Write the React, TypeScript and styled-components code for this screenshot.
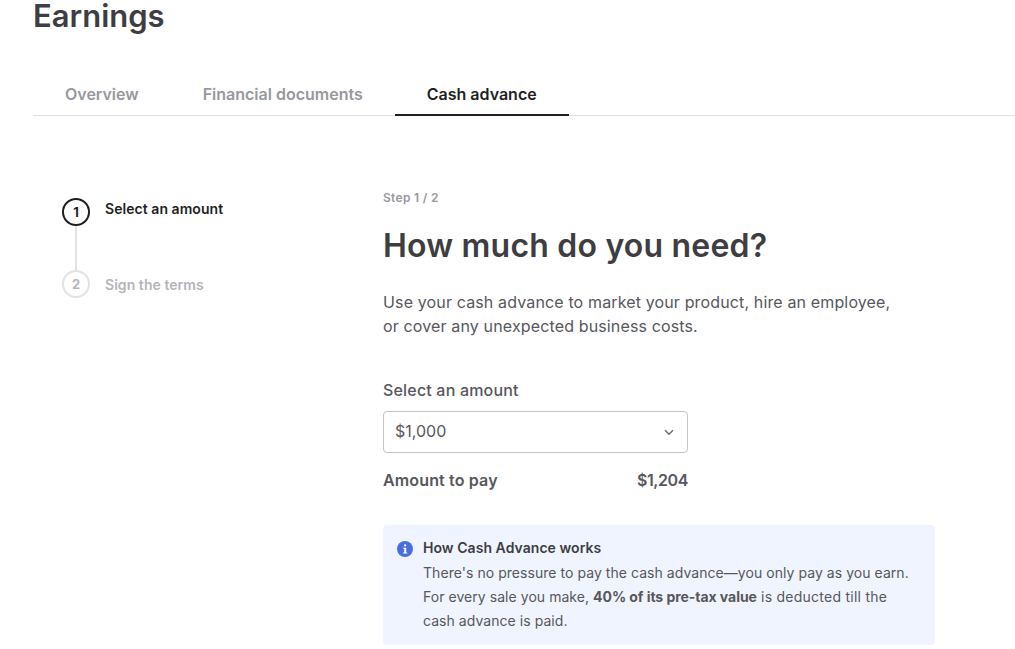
import React from 'react'
import styled, { createGlobalStyle } from 'styled-components'

const GlobalStyle = createGlobalStyle`
    html, body {
        margin: 0;
        padding: 0;
        background: #fff;
        overflow: hidden;
    }
    body {
        font-family: Inter, "Liberation Sans", sans-serif;
        color: #57575c;
    }
`;

const Page = styled.div`
    width: 1015px;
    height: 649px;
    padding-left: 33px;
    box-sizing: border-box;
    overflow: hidden;
`;

const Title = styled.h1`
    margin: 0;
    height: 32px;
    line-height: 32px;
    font-size: 31px;
    font-weight: 600;
    color: #3d3d42;
`;

const Tabs = styled.div`
    display: flex;
    height: 51px;
    margin-top: 32px;
    border-bottom: 1px solid #e0e0e2;
    box-sizing: content-box;
`;

const Tab = styled.div<{ $active?: boolean }>`
    padding: 0 32px;
    line-height: 60px;
    height: 52px;
    box-sizing: border-box;
    font-size: 16px;
    font-weight: 600;
    color: ${p => (p.$active ? '#1f1f23' : '#98989e')};
    border-bottom: 2px solid ${p => (p.$active ? '#1f1f23' : 'transparent')};
`;

const Body = styled.div`
    display: flex;
    padding-top: 72px;
`;

const Stepper = styled.div`
    width: 350px;
    padding: 10px 0 0 29px;
    box-sizing: border-box;
    flex-shrink: 0;
`;

const StepRow = styled.div`
    display: flex;
    gap: 15px;
`;

const StepMarker = styled.div`
    display: flex;
    flex-direction: column;
    align-items: center;
`;

const StepCircle = styled.div<{ $active?: boolean }>`
    width: 28px;
    height: 28px;
    box-sizing: border-box;
    border-radius: 50%;
    border: 2px solid ${p => (p.$active ? '#1f1f23' : '#e3e3e5')};
    display: flex;
    align-items: center;
    justify-content: center;
    font-size: 13px;
    font-weight: 700;
    color: ${p => (p.$active ? '#1f1f23' : '#b4b4b9')};
`;

const StepLine = styled.div`
    width: 2px;
    height: 44px;
    background: #e3e3e5;
`;

const StepLabel = styled.div<{ $active?: boolean }>`
    margin-top: ${p => (p.$active ? '0' : '4px')};
    font-size: 14px;
    font-weight: 600;
    line-height: 22px;
    letter-spacing: 0.05px;
    color: ${p => (p.$active ? '#1f1f23' : '#b4b4b9')};
`;

const Content = styled.div`
    width: 552px;
`;

const StepCount = styled.div`
    font-size: 12px;
    font-weight: 600;
    line-height: 16px;
    margin-top: 2px;
    letter-spacing: 0.3px;
    color: #98989e;
`;

const Heading = styled.h2`
    margin: 18px 0 0;
    font-size: 32px;
    line-height: 44px;
    font-weight: 600;
    letter-spacing: 0.2px;
    color: #3d3d42;
`;

const Intro = styled.p`
    margin: 22px 0 0;
    font-size: 16px;
    line-height: 24px;
    letter-spacing: 0.14px;
    color: #57575c;
`;

const FieldLabel = styled.div`
    margin-top: 40px;
    font-size: 16px;
    line-height: 24px;
    font-weight: 500;
    letter-spacing: 0.18px;
    color: #57575c;
`;

const Select = styled.div`
    margin-top: 9px;
    width: 305px;
    height: 42px;
    box-sizing: border-box;
    border: 1px solid #c4c4c8;
    border-radius: 4px;
    padding: 0 13px 0 11px;
    display: flex;
    align-items: center;
    justify-content: space-between;
    font-size: 16px;
    color: #57575c;
`;

const SelectValue = styled.span`
    margin-bottom: 2px;
`;

const TotalRow = styled.div`
    margin-top: 15px;
    width: 305px;
    display: flex;
    justify-content: space-between;
    font-size: 16px;
    line-height: 24px;
    font-weight: 600;
    color: #57575c;
`;

const TotalLabel = styled.span`
    letter-spacing: 0.15px;
`;

const TotalValue = styled.span`
    letter-spacing: -0.4px;
`;

const InfoBox = styled.div`
    margin-top: 33px;
    height: 120px;
    box-sizing: border-box;
    background: #f0f4fe;
    border-radius: 4px;
    padding: 12px 14px;
    display: flex;
    gap: 10px;
`;

const InfoIcon = styled.svg`
    width: 16px;
    height: 16px;
    margin-top: 4px;
    flex-shrink: 0;
`;

const InfoTitle = styled.div`
    font-size: 14px;
    line-height: 22px;
    font-weight: 600;
    letter-spacing: 0.05px;
    color: #3d3d42;
`;

const InfoText = styled.div`
    margin-top: 2px;
    font-size: 14px;
    line-height: 24px;
    letter-spacing: 0.05px;
    color: #57575c;
    strong {
        font-weight: 700;
        letter-spacing: -0.05px;
    }
`;

const InfoTail = styled.span`
    letter-spacing: 0.25px;
`;

const App = () => {
    return (
        <Page>
            <GlobalStyle />
            <Title>Earnings</Title>
            <Tabs>
                <Tab>Overview</Tab>
                <Tab>Financial documents</Tab>
                <Tab $active>Cash advance</Tab>
            </Tabs>
            <Body>
                <Stepper>
                    <StepRow>
                        <StepMarker>
                            <StepCircle $active>1</StepCircle>
                            <StepLine />
                        </StepMarker>
                        <StepLabel $active>Select an amount</StepLabel>
                    </StepRow>
                    <StepRow>
                        <StepMarker>
                            <StepCircle>2</StepCircle>
                        </StepMarker>
                        <StepLabel>Sign the terms</StepLabel>
                    </StepRow>
                </Stepper>
                <Content>
                    <StepCount>Step 1 / 2</StepCount>
                    <Heading>How much do you need?</Heading>
                    <Intro>
                        Use your cash advance to market your product, hire an employee,
                        <br />
                        or cover any unexpected business costs.
                    </Intro>
                    <FieldLabel>Select an amount</FieldLabel>
                    <Select>
                        <SelectValue>$1,000</SelectValue>
                        <svg width="10" height="7" viewBox="0 0 10 7" fill="none">
                            <path d="M1 1.2 5 5.2l4-4" stroke="#6a6a70" strokeWidth="1.5" />
                        </svg>
                    </Select>
                    <TotalRow>
                        <TotalLabel>Amount to pay</TotalLabel>
                        <TotalValue>$1,204</TotalValue>
                    </TotalRow>
                    <InfoBox>
                        <InfoIcon viewBox="0 0 16 16">
                            <circle cx="8" cy="8" r="8" fill="#4a6ee0" />
                            <rect x="7" y="3.2" width="2.2" height="2.2" rx="1" fill="#fff" />
                            <path d="M6.4 6.8h2.8v4.6h1v1.2H6.2v-1.2h1V8H6.4z" fill="#fff" />
                        </InfoIcon>
                        <div>
                            <InfoTitle>How Cash Advance works</InfoTitle>
                            <InfoText>
                                There's no pressure to pay the cash advance—you only pay as you earn.
                                <br />
                                For every sale you make, <strong>40% of its pre-tax value</strong><InfoTail> is deducted till the</InfoTail>
                                <br />
                                cash advance is paid.
                            </InfoText>
                        </div>
                    </InfoBox>
                </Content>
            </Body>
        </Page>
    )
}

export default App
